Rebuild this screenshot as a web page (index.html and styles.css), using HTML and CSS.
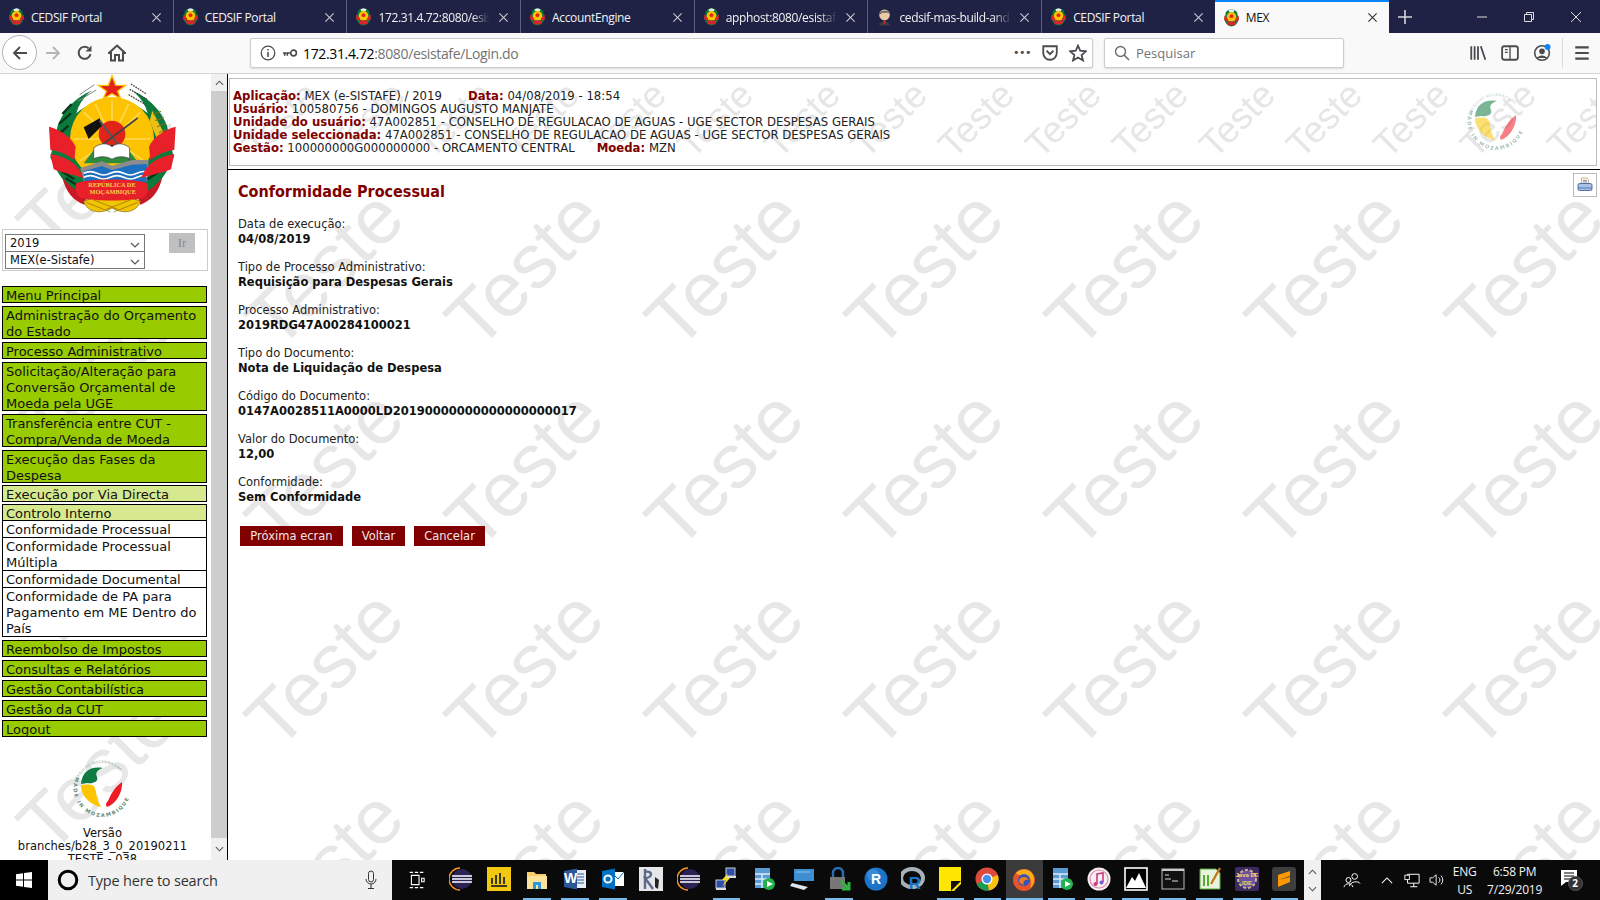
FILE: index.html
```html
<!DOCTYPE html>
<html lang="pt">
<head>
<meta charset="utf-8">
<title>MEX</title>
<link rel="stylesheet" href="styles.css">
</head>
<body>
<svg class="defs" width="0" height="0" aria-hidden="true">
  <defs>
    <pattern id="wm-big" patternUnits="userSpaceOnUse" width="200" height="200">
      <text class="wm-text-big" transform="translate(50 182) rotate(-45)">Teste</text>
    </pattern>
    <pattern id="wm-small" patternUnits="userSpaceOnUse" width="87" height="87">
      <text class="wm-text-small" transform="translate(27.7 80.7) rotate(-45)">Teste</text>
      <text class="wm-text-small" transform="translate(-59.3 80.7) rotate(-45)">Teste</text>
    </pattern>
    <symbol id="emblem" viewBox="140 10 390 420">
      <path d="M335 45 C260 50 195 100 172 165 L150 260 C185 350 260 405 335 405 C410 405 485 350 520 260 L500 165 C475 100 410 50 335 45Z" fill="#0c7a3c"/>
      <path d="M228 128 C240 80 280 48 335 25 C390 48 430 80 442 128 C410 100 370 88 335 88 C300 88 260 100 228 128Z" fill="#fff"/>
      <path d="M392 40 L438 70 M388 56 L440 86 M385 72 L436 102" stroke="#444" stroke-width="4" fill="none" stroke-dasharray="5 3"/>
      <path d="M282 42 L238 72 M288 58 L232 92" stroke="#888" stroke-width="3" fill="none"/>
      <path d="M186 130 L214 100 M176 160 L212 128 M172 195 L204 165 M182 300 L222 326 M196 322 L232 345 M480 300 L442 326" stroke="#06351a" stroke-width="7" fill="none"/>
      <path d="M456 120 L492 190 L474 215 L448 150Z" fill="#e8c018"/>
      <path d="M458 132 L482 122 M464 150 L490 140 M470 168 L496 158 M476 186 L498 176" stroke="#8a6a10" stroke-width="3"/>
      <circle cx="335" cy="205" r="126" fill="#fdc300"/>
      <path d="M335 90 V205 M250 125 L335 205 M420 125 L335 205 M220 205 H450 M240 270 L335 205 M430 270 L335 205 M285 100 L335 205 M385 100 L335 205" stroke="#ffd95a" stroke-width="5"/>
      <circle cx="335" cy="190" r="40" fill="#e2231a"/>
      <path d="M250 278 L285 232 L380 232 L415 278Z" fill="#2e8b3e"/>
      <path d="M250 170 L298 143 L305 165 L265 205Z" fill="#111"/>
      <path d="M298 150 L392 272" stroke="#555" stroke-width="6"/>
      <path d="M412 142 L285 238" stroke="#444" stroke-width="5"/>
      <path d="M300 225 L345 222 L350 238 L305 240Z" fill="#222"/>
      <path d="M280 232 C300 216 320 216 335 228 C350 216 370 216 388 232 L388 264 C370 256 350 256 335 266 C320 256 300 256 280 264Z" fill="#fff" stroke="#333" stroke-width="2"/>
      <path d="M240 292 L305 272 L335 285 L395 268 L445 268 L440 332 L250 332Z" fill="#8c8c8c"/>
      <path d="M250 302 L305 286 L335 298 L395 282 L440 280 L438 334 L252 334Z" fill="#1d6fc0"/>
      <path d="M250 308 Q270 298 290 308 T330 308 T370 308 T410 308 T440 306 M250 320 Q270 310 290 320 T330 320 T370 320 T410 320 T440 318" stroke="#fff" stroke-width="5" fill="none"/>
      <path d="M146 168 C180 178 210 195 226 228 L222 268 C195 248 172 240 150 238Z" fill="#e8202a"/>
      <path d="M150 250 C185 255 220 272 238 298 L250 322 C215 312 178 304 160 296Z" fill="#e8202a"/>
      <path d="M526 168 C492 178 462 195 446 228 L450 268 C477 248 500 240 522 238Z" fill="#e8202a"/>
      <path d="M522 250 C487 255 452 272 434 298 L422 322 C457 312 494 304 512 296Z" fill="#e8202a"/>
      <path d="M186 320 C205 345 225 362 262 374 L252 402 C220 392 195 362 186 320Z" fill="#c81a24"/>
      <path d="M486 320 C467 345 447 362 410 374 L420 402 C452 392 477 362 486 320Z" fill="#c81a24"/>
      <path d="M250 392 C290 372 380 372 420 392 C410 425 370 432 335 412 C300 432 260 425 250 392Z" fill="#f0c400" stroke="#8a6a10" stroke-width="2"/>
      <path d="M258 395 L330 424 M280 388 L352 416 M412 395 L340 424 M390 388 L318 416" stroke="#8a6a10" stroke-width="2"/>
      <path d="M226 340 C240 322 430 322 442 340 C446 360 440 372 430 382 C390 392 280 392 240 382 C230 372 224 360 226 340Z" fill="#e8202a"/>
      <text class="emblem-text" x="335" y="349">REPÚBLICA DE</text>
      <text class="emblem-text" x="337" y="371">MOÇAMBIQUE</text>
      <polygon points="335,15 346,44 376,44 352,62 361,84 335,69 309,84 318,62 294,44 324,44" fill="#e2231a" stroke="#fdc300" stroke-width="4"/>
    </symbol>
    <symbol id="made" viewBox="0 0 66 66">
      <path id="made-arc-top" d="M9 25 A25 25 0 0 1 52 17" fill="none"/>
      <path id="made-arc-bot" d="M7 22 A28.5 28.5 0 1 0 60 24" fill="none"/>
      <text class="made-text-small"><textPath href="#made-arc-top">ORGULHO MOÇAMBICANO</textPath></text>
      <text class="made-text"><textPath href="#made-arc-bot">MADE IN MOZAMBIQUE</textPath></text>
      <path d="M12 29 C13 17 21 11 34 13 C28 15 26 18 28 22 C30 27 23 29 18 28Z" fill="#0f7a42"/>
      <path d="M12 30 C17 30 24 28 26 33 C28 39 27 43 31 50 C34 54 28 51 24 49 C16 45 12 37 12 30Z" fill="#fdc500"/>
      <path d="M53 27 C54 37 47 49 38 52 C37 50 36 49 39 46 C42 39 45 33 53 27Z" fill="#ee1c25"/>
    </symbol>
    <symbol id="fav" viewBox="1.5 0.5 13 15">
      <path d="M3 5 C3 2 6 1 8 1 C10 1 13 2 13 5 L14 9 C13 13 10 15 8 15 C6 15 3 13 2 9Z" fill="#0c7a3c"/>
      <path d="M5.5 1.5 L8 0.7 L10.5 1.5 L10 3 H6Z" fill="#e8e8e8"/>
      <circle cx="8" cy="7" r="4" fill="#fdc300"/>
      <circle cx="8" cy="6.5" r="1.6" fill="#e2231a"/>
      <path d="M2 6 L5 9 L5 11 L2 10Z M14 6 L11 9 L11 11 L14 10Z" fill="#e8202a"/>
      <path d="M4 11 H12 L11 14 H5Z" fill="#d8242a"/>
    </symbol>
    <symbol id="eclipse" viewBox="0 0 24 24">
      <circle cx="13" cy="12" r="10" fill="#2c2255"/>
      <path d="M11 1 A11 11 0 0 0 11 23" fill="none" stroke="#f7941e" stroke-width="1.5"/>
      <path d="M3 9 H23 M3 12 H23 M3 15 H23" stroke="#fff" stroke-width="1.6"/>
    </symbol>
    <symbol id="table" viewBox="0 0 24 24">
      <rect x="3" y="1" width="15" height="20" fill="#5b9bd5"/>
      <path d="M3 7 H18 M3 12 H18 M3 17 H18 M10 7 V21" stroke="#dcebf7" stroke-width="1.5"/>
      <circle cx="17" cy="17" r="6" fill="#22b14c"/>
      <path d="M15 14 L21 17 L15 20Z" fill="#fff"/>
    </symbol>
    <symbol id="x" viewBox="0 0 12 12">
      <path d="M1.5 1.5 L10.5 10.5 M10.5 1.5 L1.5 10.5" fill="none" stroke="currentColor" stroke-width="1.2"/>
    </symbol>
    <symbol id="chev" viewBox="0 0 10 6">
      <path d="M1 1 L5 5 L9 1" fill="none" stroke="#555" stroke-width="1.2"/>
    </symbol>
  </defs>
</svg>

<header class="chrome">
  <div class="tabs">
    <div class="tab"><svg class="fav"><use href="#fav"/></svg><span class="tab-title">CEDSIF Portal</span><svg class="tab-x"><use href="#x"/></svg></div>
    <div class="tab"><svg class="fav"><use href="#fav"/></svg><span class="tab-title">CEDSIF Portal</span><svg class="tab-x"><use href="#x"/></svg></div>
    <div class="tab"><svg class="fav"><use href="#fav"/></svg><span class="tab-title fade">172.31.4.72:8080/esist</span><svg class="tab-x"><use href="#x"/></svg></div>
    <div class="tab"><svg class="fav"><use href="#fav"/></svg><span class="tab-title">AccountEngine</span><svg class="tab-x"><use href="#x"/></svg></div>
    <div class="tab"><svg class="fav"><use href="#fav"/></svg><span class="tab-title fade">apphost:8080/esistafe</span><svg class="tab-x"><use href="#x"/></svg></div>
    <div class="tab"><svg class="fav" viewBox="0 0 16 16"><circle cx="8" cy="6" r="5" fill="#e8c9a8"/><path d="M3 6 C3 1 13 1 13 5 L11 4 L6 4Z" fill="#666"/><path d="M3 16 C3 11 13 11 13 16Z" fill="#3a3a4a"/><path d="M7 11 L9 11 L8.5 15 L7.5 15Z" fill="#c0392b"/></svg><span class="tab-title fade">cedsif-mas-build-and</span><svg class="tab-x"><use href="#x"/></svg></div>
    <div class="tab"><svg class="fav"><use href="#fav"/></svg><span class="tab-title">CEDSIF Portal</span><svg class="tab-x"><use href="#x"/></svg></div>
    <div class="tab active"><svg class="fav"><use href="#fav"/></svg><span class="tab-title">MEX</span><svg class="tab-x"><use href="#x"/></svg></div>
    <svg class="newtab" viewBox="0 0 14 14"><path d="M7 0 V14 M0 7 H14" stroke="#d6d6dc" stroke-width="1.6"/></svg>
    <div class="winctl">
      <svg class="wc" viewBox="0 0 12 12"><path d="M1 6 H11" stroke="#ddd" stroke-width="1"/></svg>
      <svg class="wc" viewBox="0 0 12 12"><path d="M1.5 3.5 H8.5 V10.5 H1.5Z M3.5 3.5 V1.5 H10.5 V8.5 H8.5" fill="none" stroke="#ddd" stroke-width="1"/></svg>
      <svg class="wc" viewBox="0 0 12 12"><path d="M1 1 L11 11 M11 1 L1 11" stroke="#ddd" stroke-width="1"/></svg>
    </div>
  </div>
  <div class="toolbar">
    <div class="nav-back"><svg class="ti" viewBox="0 0 18 18"><path d="M16 9 H3 M9 3 L3 9 L9 15" fill="none" stroke="#4a4a4f" stroke-width="1.8"/></svg></div>
    <svg class="ti nav" viewBox="0 0 18 18"><path d="M2 9 H15 M9 3 L15 9 L9 15" fill="none" stroke="#b5b5b7" stroke-width="1.8"/></svg>
    <svg class="ti nav" viewBox="0 0 18 18"><path d="M14.5 10 A6 6 0 1 1 12.5 4.2" fill="none" stroke="#4a4a4f" stroke-width="2"/><path d="M15.5 1.5 V7.5 H9.5Z" fill="#4a4a4f"/></svg>
    <svg class="ti nav" viewBox="0 0 18 18"><path d="M9 1.5 L17 9 L15 9 V16.5 H11 V11 H7 V16.5 H3 V9 L1 9Z" fill="none" stroke="#4a4a4f" stroke-width="2"/></svg>
    <div class="urlbar">
      <svg class="ui-info" viewBox="0 0 16 16"><circle cx="8" cy="8" r="6.8" fill="none" stroke="#4a4a4f" stroke-width="1.2"/><path d="M8 7 V12 M8 4 V5.6" stroke="#4a4a4f" stroke-width="1.5"/></svg>
      <svg class="ui-key" viewBox="0 0 18 10"><circle cx="13" cy="5" r="3.2" fill="none" stroke="#4a4a4f" stroke-width="1.8"/><path d="M1 5 H10 M3 5 V8 M6 5 V8" stroke="#4a4a4f" stroke-width="1.8"/></svg>
      <span class="url"><span class="url-host">172.31.4.72</span>:8080/esistafe/Login.do</span>
      <span class="dots">•••</span>
      <svg class="ti-s" viewBox="0 0 16 16"><path d="M2 2 H14 V8 A6 6 0 0 1 2 8Z M5 6 L8 9 L11 6" fill="none" stroke="#4a4a4f" stroke-width="1.6"/></svg>
      <svg class="ti-s" viewBox="0 0 16 16"><path d="M8 1.5 L10 6 L15 6.5 L11.2 9.8 L12.4 14.6 L8 12 L3.6 14.6 L4.8 9.8 L1 6.5 L6 6Z" fill="none" stroke="#4a4a4f" stroke-width="1.6"/></svg>
    </div>
    <div class="searchbar">
      <svg class="search-i" viewBox="0 0 16 16"><circle cx="6.5" cy="6.5" r="5" fill="none" stroke="#6a6a6f" stroke-width="1.4"/><path d="M10 10 L15 15" stroke="#6a6a6f" stroke-width="1.6"/></svg>
      <span class="search-t">Pesquisar</span>
    </div>
    <div class="toolicons">
      <svg class="ti-s" viewBox="0 0 16 16"><path d="M2 2 V14 M5 2 V14 M8 2 V14 M10.5 2 L14.5 14" stroke="#4a4a4f" stroke-width="1.6" fill="none"/></svg>
      <svg class="ti-s" viewBox="0 0 16 16"><rect x="1" y="2" width="14" height="12" rx="2" fill="none" stroke="#4a4a4f" stroke-width="1.6"/><path d="M3.5 5 H6 M3.5 7.5 H6 M8 2 V14" stroke="#4a4a4f" stroke-width="1.2"/></svg>
      <svg class="ti-s" viewBox="0 0 16 16"><circle cx="8" cy="8" r="6.5" fill="none" stroke="#4a4a4f" stroke-width="1.4"/><circle cx="8" cy="6.5" r="2.5" fill="#4a4a4f"/><path d="M3.5 12.5 C5 9.5 11 9.5 12.5 12.5Z" fill="#4a4a4f"/><circle cx="13" cy="2.6" r="2.6" fill="#0a84ff"/></svg>
      <span class="tb-sep"></span>
      <svg class="ti-s" viewBox="0 0 16 16"><path d="M2 3 H14 M2 8 H14 M2 13 H14" stroke="#4a4a4f" stroke-width="1.8"/></svg>
    </div>
  </div>
</header>

<div class="frames">
  <aside class="side">
    <svg class="wm-layer"><rect width="100%" height="100%" fill="url(#wm-big)"/></svg>
    <div class="side-in">
      <svg class="emblem"><use href="#emblem"/></svg>
      <div class="picker">
        <div class="selects">
          <div class="sel"><span>2019</span><svg class="sel-c"><use href="#chev"/></svg></div>
          <div class="sel"><span>MEX(e-Sistafe)</span><svg class="sel-c"><use href="#chev"/></svg></div>
        </div>
        <span class="ir">Ir</span>
      </div>
      <nav class="menu">
        <a class="mi"><span>Menu Principal</span></a>
        <a class="mi"><span>Administração do Orçamento do Estado</span></a>
        <a class="mi"><span>Processo Administrativo</span></a>
        <a class="mi"><span>Solicitação/Alteração para Conversão Orçamental de Moeda pela UGE</span></a>
        <a class="mi"><span>Transferência entre CUT - Compra/Venda de Moeda</span></a>
        <a class="mi"><span>Execução das Fases da Despesa</span></a>
        <a class="mi light"><span>Execução por Via Directa</span></a>
        <div class="group">
          <a class="mi light"><span>Controlo Interno</span></a>
          <a class="sub"><span>Conformidade Processual</span></a>
          <a class="sub"><span>Conformidade Processual Múltipla</span></a>
          <a class="sub"><span>Conformidade Documental</span></a>
          <a class="sub"><span>Conformidade de PA para Pagamento em ME Dentro do País</span></a>
        </div>
        <a class="mi"><span>Reembolso de Impostos</span></a>
        <a class="mi"><span>Consultas e Relatórios</span></a>
        <a class="mi"><span>Gestão Contabilística</span></a>
        <a class="mi"><span>Gestão da CUT</span></a>
        <a class="mi"><span>Logout</span></a>
      </nav>
      <svg class="made"><use href="#made"/></svg>
      <div class="version">Versão<br>branches/b28_3_0_20190211<br>TESTE - 038</div>
    </div>
  </aside>
  <div class="scroll">
    <div class="sb-btn"><svg class="sb-c up"><use href="#chev"/></svg></div>
    <div class="sb-thumb"></div>
    <div class="sb-btn down"><svg class="sb-c"><use href="#chev"/></svg></div>
  </div>
  <div class="right">
    <div class="head-frame">
      <div class="head-box">
        <svg class="wm-layer"><rect width="100%" height="100%" fill="url(#wm-small)"/></svg>
        <div class="head-text">
          <div><b>Aplicação:</b> MEX (e-SISTAFE) / 2019<span class="sp"></span><b>Data:</b> 04/08/2019 - 18:54</div>
          <div><b>Usuário:</b> 100580756 - DOMINGOS AUGUSTO MANJATE</div>
          <div><b>Unidade do usuário:</b> 47A002851 - CONSELHO DE REGULACAO DE AGUAS - UGE SECTOR DESPESAS GERAIS</div>
          <div><b>Unidade seleccionada:</b> 47A002851 - CONSELHO DE REGULACAO DE AGUAS - UGE SECTOR DESPESAS GERAIS</div>
          <div><b>Gestão:</b> 100000000G000000000 - ORCAMENTO CENTRAL<span class="sp tight"></span><b>Moeda:</b> MZN</div>
        </div>
        <svg class="head-logo"><use href="#made"/></svg>
      </div>
    </div>
    <main class="main">
      <svg class="wm-layer"><rect width="100%" height="100%" fill="url(#wm-big)"/></svg>
      <div class="print"><svg class="print-i" viewBox="0 0 16 16"><path d="M4.5 1 H10 L11.5 2.5 V7 H4.5Z" fill="#fbf6e6" stroke="#b8a878" stroke-width=".8"/><path d="M6 3.5 H10 M6 5 H10" stroke="#6a7ea8" stroke-width=".8"/><rect x="1" y="6.5" width="14" height="7" rx="1.5" fill="#a9c1e4" stroke="#44659f" stroke-width=".9"/><path d="M1 11 H15" stroke="#44659f" stroke-width=".8"/></svg></div>
      <div class="content">
        <h1 class="title">Conformidade Processual</h1>
        <div class="field"><div>Data de execução:</div><div class="val">04/08/2019</div></div>
        <div class="field"><div>Tipo de Processo Administrativo:</div><div class="val">Requisição para Despesas Gerais</div></div>
        <div class="field"><div>Processo Administrativo:</div><div class="val">2019RDG47A00284100021</div></div>
        <div class="field"><div>Tipo do Documento:</div><div class="val">Nota de Liquidação de Despesa</div></div>
        <div class="field"><div>Código do Documento:</div><div class="val">0147A0028511A0000LD20190000000000000000017</div></div>
        <div class="field"><div>Valor do Documento:</div><div class="val">12,00</div></div>
        <div class="field"><div>Conformidade:</div><div class="val">Sem Conformidade</div></div>
        <div class="btns">
          <button class="btn w1">Próxima ecran</button>
          <button class="btn w2">Voltar</button>
          <button class="btn w3">Cancelar</button>
        </div>
      </div>
    </main>
  </div>
</div>

<footer class="taskbar">
  <div class="start"><svg class="win" viewBox="0 0 16 16"><path d="M0 2.3 L7 1.3 V7.5 H0Z M8 1.1 L16 0 V7.5 H8Z M0 8.5 H7 V14.7 L0 13.7Z M8 8.5 H16 V16 L8 14.9Z" fill="#fff"/></svg></div>
  <div class="tsearch">
    <svg class="cortana" viewBox="0 0 22 22"><circle cx="11" cy="11" r="8.8" fill="none" stroke="#000" stroke-width="3"/></svg>
    <span class="tsearch-t">Type here to search</span>
    <svg class="mic" viewBox="0 0 12 20"><rect x="3.5" y="1" width="5" height="11" rx="2.5" fill="none" stroke="#333" stroke-width="1"/><path d="M1 9 A5 5 0 0 0 11 9 M6 14 V18 M3 18.5 H9" fill="none" stroke="#333" stroke-width="1"/></svg>
  </div>
  <div class="taskview"><svg class="tv" viewBox="0 0 20 20"><path d="M2 1 H6 M8 1 H12 M14 1 H18 M2 19 H6 M8 19 H12 M14 19 H18 M4 4.5 H13 V15.5 H4Z M16 8 H19 V12 H16Z" fill="none" stroke="#fff" stroke-width="1.3"/></svg></div>
  <div class="apps">
    <div class="app"><svg class="ai"><use href="#eclipse"/></svg></div>
    <div class="app"><svg class="ai" viewBox="0 0 24 24"><rect width="24" height="24" fill="#f2c811"/><path d="M5 17 V11 M9 17 V8 M13 17 V6 M17 17 V10 M4 19 H20" stroke="#3a3a1a" stroke-width="2" fill="none"/></svg></div>
    <div class="app run"><svg class="ai" viewBox="0 0 24 24"><path d="M2 5 H9 L11 7 H21 V22 H2Z" fill="#f4cf6a"/><path d="M2 9 H22 V22 H2Z" fill="#fbe39a"/><path d="M8 22 V15 H16 V22 H13 V18 H11 V22Z" fill="#2a9ad8"/></svg></div>
    <div class="app run"><svg class="ai" viewBox="0 0 24 24"><rect x="8" y="3" width="15" height="18" fill="#e8eef7"/><path d="M14 7 H21 M14 10 H21 M14 13 H21 M14 16 H21" stroke="#2b579a"/><path d="M1 4 L14 1.5 V22.5 L1 20Z" fill="#2b579a"/><text class="ai-t" x="7.5" y="16">W</text></svg></div>
    <div class="app run"><svg class="ai" viewBox="0 0 24 24"><rect x="10" y="5" width="13" height="14" fill="#fff"/><path d="M10 5 L17 12 L23 5" fill="none" stroke="#0072c6"/><path d="M1 4 L14 1.5 V22.5 L1 20Z" fill="#0072c6"/><circle cx="7" cy="12" r="3.6" fill="none" stroke="#fff" stroke-width="2"/></svg></div>
    <div class="app"><svg class="ai" viewBox="0 0 24 24"><rect width="24" height="24" fill="#e6e6ea"/><path d="M6 2 V22 M6 5 C14 3 14 11 6 11 L14 22" fill="none" stroke="#5a6a8a" stroke-width="2.4"/><path d="M16 10 L20 13 L19 22 L16 20Z" fill="#222"/></svg></div>
    <div class="app"><svg class="ai"><use href="#eclipse"/></svg></div>
    <div class="app run"><svg class="ai" viewBox="0 0 24 24"><rect x="12" y="1" width="9" height="8" fill="#2b4fa8" stroke="#ccc"/><rect x="2" y="13" width="9" height="8" fill="#2b4fa8" stroke="#ccc"/><path d="M2 22 H12 M12 10 H22" stroke="#ddd" stroke-width="2"/><path d="M14 6 L8 13 L12 13 L8 20 L16 11 L12 11Z" fill="#f5e11b"/></svg></div>
    <div class="app"><svg class="ai"><use href="#table"/></svg></div>
    <div class="app"><svg class="ai" viewBox="0 0 24 24"><path d="M4 2 H24 V14 H4Z" fill="#3d8fd1"/><path d="M2 16 L18 20 L14 23 L0 19Z" fill="#dfe5ea"/><path d="M6 5 L20 5" stroke="#8ec4ec"/></svg></div>
    <div class="app run"><svg class="ai" viewBox="0 0 24 24"><path d="M6 10 V6 A5 5 0 0 1 16 6 V10" fill="none" stroke="#2a6db0" stroke-width="2.4"/><rect x="3" y="10" width="15" height="12" fill="#777"/><path d="M14 14 L22 22 M22 15 V22 H15" fill="none" stroke="#2fb344" stroke-width="3"/></svg></div>
    <div class="app"><svg class="ai" viewBox="0 0 24 24"><circle cx="12" cy="12" r="11.5" fill="#1b74c9"/><circle cx="9" cy="8" r="6" fill="#4d9be0" opacity=".6"/><text class="ai-t" x="12" y="17">R</text></svg></div>
    <div class="app"><svg class="ai" viewBox="0 0 24 24"><ellipse cx="11" cy="11" rx="11" ry="9" fill="none" stroke="#aab0b8" stroke-width="4"/><text class="ai-r" x="14" y="22">R</text></svg></div>
    <div class="app run"><svg class="ai" viewBox="0 0 24 24"><path d="M1 0 H23 V17 L16 24 H1Z" fill="#ffe600"/><path d="M23 14 L13 24 V14Z" fill="#111"/></svg></div>
    <div class="app run"><svg class="ai" viewBox="0 0 24 24"><circle cx="12" cy="12" r="11.5" fill="#dd4b3e"/><path d="M12 12 L1.6 17 A11.5 11.5 0 0 0 14 23.4Z" fill="#1a9e50"/><path d="M12 12 L22.8 8 A11.5 11.5 0 0 1 14 23.4Z" fill="#f6c40e"/><circle cx="12" cy="12" r="5.5" fill="#fff"/><circle cx="12" cy="12" r="4.2" fill="#4a8df0"/></svg></div>
    <div class="app run cur"><svg class="ai" viewBox="0 0 24 24"><circle cx="12" cy="13" r="11" fill="#e8542a"/><path d="M4 6 C8 1 18 1 21 8 C23 12 22 18 18 21 C21 14 18 8 12 8 C9 8 6 9 4 6Z" fill="#fbb017"/><circle cx="12" cy="13" r="6" fill="#3654b5"/><path d="M7 13 C9 9 15 9 17 13 C14 11 10 15 12 18 C9 17 7 16 7 13Z" fill="#f07d22"/></svg></div>
    <div class="app run"><svg class="ai"><use href="#table"/></svg></div>
    <div class="app run"><svg class="ai" viewBox="0 0 24 24"><circle cx="12" cy="12" r="11.5" fill="#f5eef3"/><circle cx="12" cy="12" r="9" fill="none" stroke="#e58ab0" stroke-width="1.2"/><path d="M10 17 V7 L16 6 V15" fill="none" stroke="#c73c7a" stroke-width="1.6"/><circle cx="8.5" cy="17" r="2" fill="#c73c7a"/><circle cx="14.5" cy="15.5" r="2" fill="#7b5bd0"/></svg></div>
    <div class="app run"><svg class="ai" viewBox="0 0 24 24"><rect x="1" y="1" width="22" height="22" fill="#000" stroke="#fff" stroke-width="1.6"/><path d="M2 21 L8 10 L11 14 L15 6 L22 21Z" fill="#fff"/></svg></div>
    <div class="app run"><svg class="ai" viewBox="0 0 24 24"><rect x="1" y="2" width="22" height="20" fill="#111" stroke="#bbb"/><path d="M1 3 H23" stroke="#c9c9c9" stroke-width="2"/><path d="M4 8 H8 M4 12 H10 M11 14 H17" stroke="#ddd" stroke-width="1.2"/></svg></div>
    <div class="app run"><svg class="ai" viewBox="0 0 24 24"><path d="M2 2 H18 L22 6 V22 H2Z" fill="#e8f3dc" stroke="#58a83a"/><path d="M6 8 V19 M10 8 V19" stroke="#58a83a" stroke-width="2"/><path d="M22 1 L13 17" stroke="#c47a1a" stroke-width="2.4"/></svg></div>
    <div class="app run"><svg class="ai" viewBox="0 0 24 24"><rect width="24" height="24" rx="2" fill="#3c2a63"/><circle cx="12" cy="12" r="9" fill="#6e4fa0" stroke="#c7b98a" stroke-width="2" stroke-dasharray="3 2"/><text class="ai-j" x="12" y="10">Java EE</text><text class="ai-j" x="12" y="18">IDE</text></svg></div>
    <div class="app run"><svg class="ai" viewBox="0 0 24 24"><rect width="24" height="24" rx="3" fill="#3e3e3e"/><path d="M6 8 L18 4 V9 L6 13Z M6 13 L18 10 V15 L6 20 V15Z" fill="#ff9800"/></svg></div>
  </div>
  <div class="tscroll">
    <svg class="ts-c flip"><use href="#chev"/></svg>
    <svg class="ts-c"><use href="#chev"/></svg>
  </div>
  <div class="tray">
    <svg class="tray-people" viewBox="0 0 20 18"><circle cx="13" cy="5" r="3.2" fill="none" stroke="#fff" stroke-width="1.1"/><path d="M7 16 C8 10 18 10 19 13" fill="none" stroke="#fff" stroke-width="1.1"/><circle cx="6" cy="9" r="2.8" fill="none" stroke="#fff" stroke-width="1.1"/><path d="M1 17 C2 12 10 12 11 17" fill="none" stroke="#fff" stroke-width="1.1"/></svg>
    <svg class="tray-up" viewBox="0 0 14 8"><path d="M1 7 L7 1 L13 7" fill="none" stroke="#fff" stroke-width="1.2"/></svg>
    <svg class="tray-net" viewBox="0 0 18 16"><path d="M4 1 H17 V11 H4Z M11 11 V15 M7 15 H15" fill="#000" stroke="#fff" stroke-width="1.1"/><rect x="1" y="2" width="5" height="5" fill="#000" stroke="#fff"/></svg>
    <svg class="tray-snd" viewBox="0 0 18 16"><path d="M1 5.5 H4 L8 2 V14 L4 10.5 H1Z" fill="none" stroke="#fff"/><path d="M11 5 A4 4 0 0 1 11 11 M13.5 3 A7 7 0 0 1 13.5 13" fill="none" stroke="#fff"/></svg>
    <div class="tray-txt lang"><span>ENG</span><span>US</span></div>
    <div class="tray-txt clock"><span>6:58 PM</span><span>7/29/2019</span></div>
    <div class="notif">
      <svg class="notif-i" viewBox="0 0 16 16"><path d="M0 0 H16 V12 H5 L0 16Z" fill="#fff"/><path d="M3 3 H13 M3 6 H13 M3 9 H10" stroke="#000"/></svg>
      <span class="badge">2</span>
    </div>
  </div>
</footer>
</body>
</html>
```

FILE: styles.css
```css
* { box-sizing: border-box; }
html, body { margin: 0; padding: 0; width: 1600px; height: 900px; overflow: hidden; background: #fff; }
body { display: flex; flex-direction: column; font-family: "DejaVu Sans", Verdana, sans-serif; color: #000; }
svg { display: block; flex: none; }
.defs { position: absolute; }

/* Watermark */
.wm-text-big { font: 77px "Liberation Sans", Arial, sans-serif; fill: #e7e7e7; }
.wm-text-small { font: 37px "Liberation Sans", Arial, sans-serif; fill: #e6e6e6; }
.wm-layer { position: absolute; left: 0; top: 0; width: 100%; height: 100%; }

/* Browser chrome */
.chrome { flex: none; height: 74px; }
.tabs { display: flex; height: 33px; background: #1f2244; align-items: stretch; }
.tab { width: 173.7px; display: flex; align-items: center; padding: 1px 11px 0 8px; border-right: 1px solid #5d6078; color: #f2f2f4; font: 12px "Open Sans", sans-serif; }
.tab.active { background: #f9f9fa; color: #111; border-top: 2px solid #0a84ff; border-right: 0; margin-left: -1px; width: 174px; padding-top: 0; }
.fav { width: 17px; height: 18px; margin-right: 6px; }
.tab-title { flex: 1; white-space: nowrap; overflow: hidden; letter-spacing: -.35px; }
.fade { -webkit-mask-image: linear-gradient(90deg, #000 84%, transparent); mask-image: linear-gradient(90deg, #000 84%, transparent); }
.tab-x { width: 11px; height: 11px; color: #c9c9d2; margin-left: 8px; }
.active .tab-x { color: #333; }
.newtab { width: 14px; height: 14px; margin: auto 0 auto 9.5px; }
.winctl { margin-left: auto; display: flex; align-items: center; gap: 35px; padding-right: 18px; }
.wc { width: 12px; height: 12px; }

.toolbar { height: 41px; background: #f9f9fa; border-bottom: 1px solid #d4d4d4; display: flex; align-items: center; padding: 0 0 1px 2px; }
.nav-back { width: 35px; height: 35px; border: 1px solid #b1b1b3; border-radius: 50%; background: #fff; display: flex; align-items: center; justify-content: center; margin-right: 7px; }
.ti { width: 18px; height: 18px; }
.nav { margin-right: 14px; }
.ti-s { width: 18px; height: 18px; }
.urlbar { margin-left: 110px; width: 843px; height: 30px; background: #fff; border: 1px solid #ccc; border-radius: 2px; box-shadow: 0 1px 2px rgba(0,0,0,.12); display: flex; align-items: center; padding: 0 5px 0 9px; }
.ui-info { width: 16px; height: 16px; margin-right: 6px; }
.ui-key { width: 16px; height: 10px; margin-right: 5px; }
.url { flex: 1; padding-top: 1px; font: 14px "Open Sans", sans-serif; color: #737373; letter-spacing: -.35px; }
.url-host { color: #000; }
.dots { font: 11px "DejaVu Sans", sans-serif; color: #4a4a4f; letter-spacing: -.5px; margin-right: 10px; }
.urlbar .ti-s + .ti-s { margin-left: 10px; }
.searchbar { margin-left: 11px; width: 240px; height: 30px; background: #fff; border: 1px solid #ccc; border-radius: 2px; box-shadow: 0 1px 2px rgba(0,0,0,.12); display: flex; align-items: center; padding-left: 9px; }
.search-i { width: 16px; height: 16px; margin-right: 6px; }
.search-t { padding-top: 1px; font: 13px "Open Sans", sans-serif; color: #737373; }
.toolicons { display: flex; align-items: center; margin-left: 125px; gap: 14px; }
.tb-sep { width: 1px; height: 30px; background: #dcdcdc; margin: 0 -4px 0 -3px; }

/* Frames */
.frames { flex: none; height: 786px; display: flex; }
.side { position: relative; width: 211px; overflow: hidden; }
.side-in { position: relative; }
.emblem { width: 130px; height: 140px; margin: 0 0 0 47px; }
.picker { margin: 15px 0 0 2px; width: 206px; height: 42px; border: 1px solid #ccc; background: #fff; display: flex; padding: 4px 0 0 2px; }
.selects { width: 140px; }
.sel { width: 140px; height: 18px; margin-bottom: -1px; border: 1px solid #777; background: #fff; display: flex; align-items: center; justify-content: space-between; padding: 1px 4px 0; font-size: 11.5px; line-height: 15px; color: #111; }
.sel-c { width: 10px; height: 6px; margin-top: 3px; }
.ir { margin: -1px 0 0 24px; width: 26px; height: 20px; background: #c0c0c0; color: #8a8a8a; font: 13px/20px "Liberation Serif", serif; text-align: center; }

.menu { margin: 15px 0 0 2px; width: 205px; display: flex; flex-direction: column; gap: 3px; font-size: 13px; line-height: 16px; }
.mi { display: block; border: 1px solid #000; background: #99cc00; padding-left: 3px; color: #111; }
.mi span { display: block; margin-top: 1px; margin-bottom: -2px; }
.mi.light { background: #d6e98f; margin-top: -1px; }
.group { display: flex; flex-direction: column; gap: 2px; }
.group .light { margin-top: -1px; }
.sub { display: block; border: 1px solid #000; border-top: 0; background: #fff; padding-left: 3px; margin-top: -2px; color: #111; }
.sub span { display: block; margin-top: 1px; margin-bottom: -1px; }
.made { width: 66px; height: 66px; margin: 18px 0 0 69px; }
.made-text { font: bold 5px "DejaVu Sans", sans-serif; fill: #5f8a78; letter-spacing: 1.5px; }
.made-text-small { font: 3.4px "DejaVu Sans", sans-serif; fill: #7fa396; letter-spacing: .4px; }
.emblem-text { font: bold 19px "Liberation Serif", serif; fill: #f6d24a; text-anchor: middle; }
.version { margin-top: 6px; width: 205px; text-align: center; font-size: 11.5px; line-height: 13px; color: #111; }

.scroll { width: 16px; display: flex; flex-direction: column; background: #f0f0f0; }
.sb-btn { height: 17px; display: flex; align-items: center; justify-content: center; }
.sb-btn.down { height: 22px; }
.sb-c { width: 9px; height: 6px; }
.up { transform: scaleY(-1); }
.sb-thumb { flex: 1; background: #cdcdcd; }

.right { flex: 1; min-width: 0; display: flex; flex-direction: column; border-left: 1px solid #000; }
.head-frame { flex: none; height: 96px; padding: 4px 3px 3px 1px; border-bottom: 1px solid #000; }
.head-box { position: relative; height: 88px; border: 1px solid #bdbdbd; overflow: hidden; background: #fff; }
.head-text { position: relative; padding: 11px 0 0 3px; font: 11.7px/13px "DejaVu Sans", sans-serif; color: #222; }
.head-text b { color: #800000; }
.sp { display: inline-block; width: 26px; }
.sp.tight { width: 22px; }
.head-logo { position: absolute; right: 67px; top: 9px; width: 66px; height: 66px; opacity: .55; }

.main { position: relative; flex: 1; min-height: 0; overflow: hidden; }
.content { position: relative; padding: 12px 0 0 10px; font-size: 11.5px; line-height: 15px; color: #222; }
.title { margin: 0 0 15px; font: bold 16px/20px "DejaVu Sans Condensed", "DejaVu Sans", sans-serif; color: #800000; }
.field { margin-bottom: 13px; }
.val { font-weight: bold; color: #111; }
.btns { display: flex; gap: 9px; margin: 21px 0 0 2px; }
.btn { height: 20px; background: #800000; color: #f0e6e6; border: 0; padding: 0; font: 11.5px "DejaVu Sans", sans-serif; }
.w1 { width: 103px; } .w2 { width: 53px; } .w3 { width: 71px; }
.print { position: absolute; top: 3px; right: 3px; width: 24px; height: 24px; border: 1px solid #bbb; background: #fff; display: flex; align-items: center; justify-content: center; z-index: 1; }
.print-i { width: 16px; height: 16px; }

/* Taskbar */
.taskbar { flex: none; height: 40px; background: #0a0a0a; display: flex; color: #fff; position: relative; }
.start { width: 48px; display: flex; align-items: center; justify-content: center; background: #000; }
.win { width: 16px; height: 16px; }
.tsearch { width: 344px; background: #f0f0f0; display: flex; align-items: center; padding-left: 9px; }
.cortana { width: 22px; height: 22px; margin-right: 9px; }
.tsearch-t { flex: 1; font: 14.5px "Open Sans", sans-serif; color: #333; letter-spacing: -.2px; }
.mic { width: 12px; height: 20px; margin-right: 15px; }
.taskview { width: 50.3px; display: flex; align-items: center; justify-content: center; }
.tv { width: 17px; height: 20px; margin-right: 1px; }
.apps { display: flex; }
.app { width: 37.1px; display: flex; align-items: center; justify-content: center; position: relative; padding-bottom: 2px; }
.app:nth-child(-n+9) { width: 37.9px; }
.app.run::after { content: ""; position: absolute; left: 5px; right: 5px; bottom: 0; height: 2px; background: #76b9ed; }
.app.cur { background: #3b3b3b; }
.app.cur::after { left: 0; right: 0; }
.ai { width: 24px; height: 24px; }
.ai-t { font: bold 14px "Liberation Sans", sans-serif; fill: #fff; text-anchor: middle; }
.ai-r { font: bold 17px "Liberation Sans", sans-serif; fill: #1b74c9; text-anchor: middle; }
.ai-j { font: bold 6px "Liberation Sans", sans-serif; fill: #f3d36a; text-anchor: middle; }
.tscroll { width: 17px; margin-left: 1px; background: #f0f0f0; display: flex; flex-direction: column; align-items: center; justify-content: space-around; padding: 3px 0; }
.ts-c { width: 9px; height: 6px; }
.flip { transform: scaleY(-1); }
.tray { flex: 1; display: flex; align-items: center; padding-left: 22px; }
.tray-people { width: 18px; height: 16px; margin-right: 20px; }
.tray-up { width: 12px; height: 7px; margin-right: 11px; }
.tray-net { width: 16px; height: 15px; margin-right: 9px; }
.tray-snd { width: 16px; height: 14px; margin-right: 6px; }
.tray-txt { display: flex; flex-direction: column; align-items: center; padding-top: 1px; font: 12px/18px "Open Sans", sans-serif; color: #f2f2f2; letter-spacing: -.2px; }
.lang { width: 28px; }
.clock { width: 58px; margin-left: 7px; }
.notif { position: relative; margin-left: 17px; width: 18px; height: 20px; }
.notif-i { width: 16px; height: 16px; }
.badge { position: absolute; left: 7px; top: 6px; width: 15px; height: 15px; border-radius: 50%; background: #333; border: 1px solid #555; font: bold 10px/13px "Open Sans", sans-serif; text-align: center; color: #fff; }
```
